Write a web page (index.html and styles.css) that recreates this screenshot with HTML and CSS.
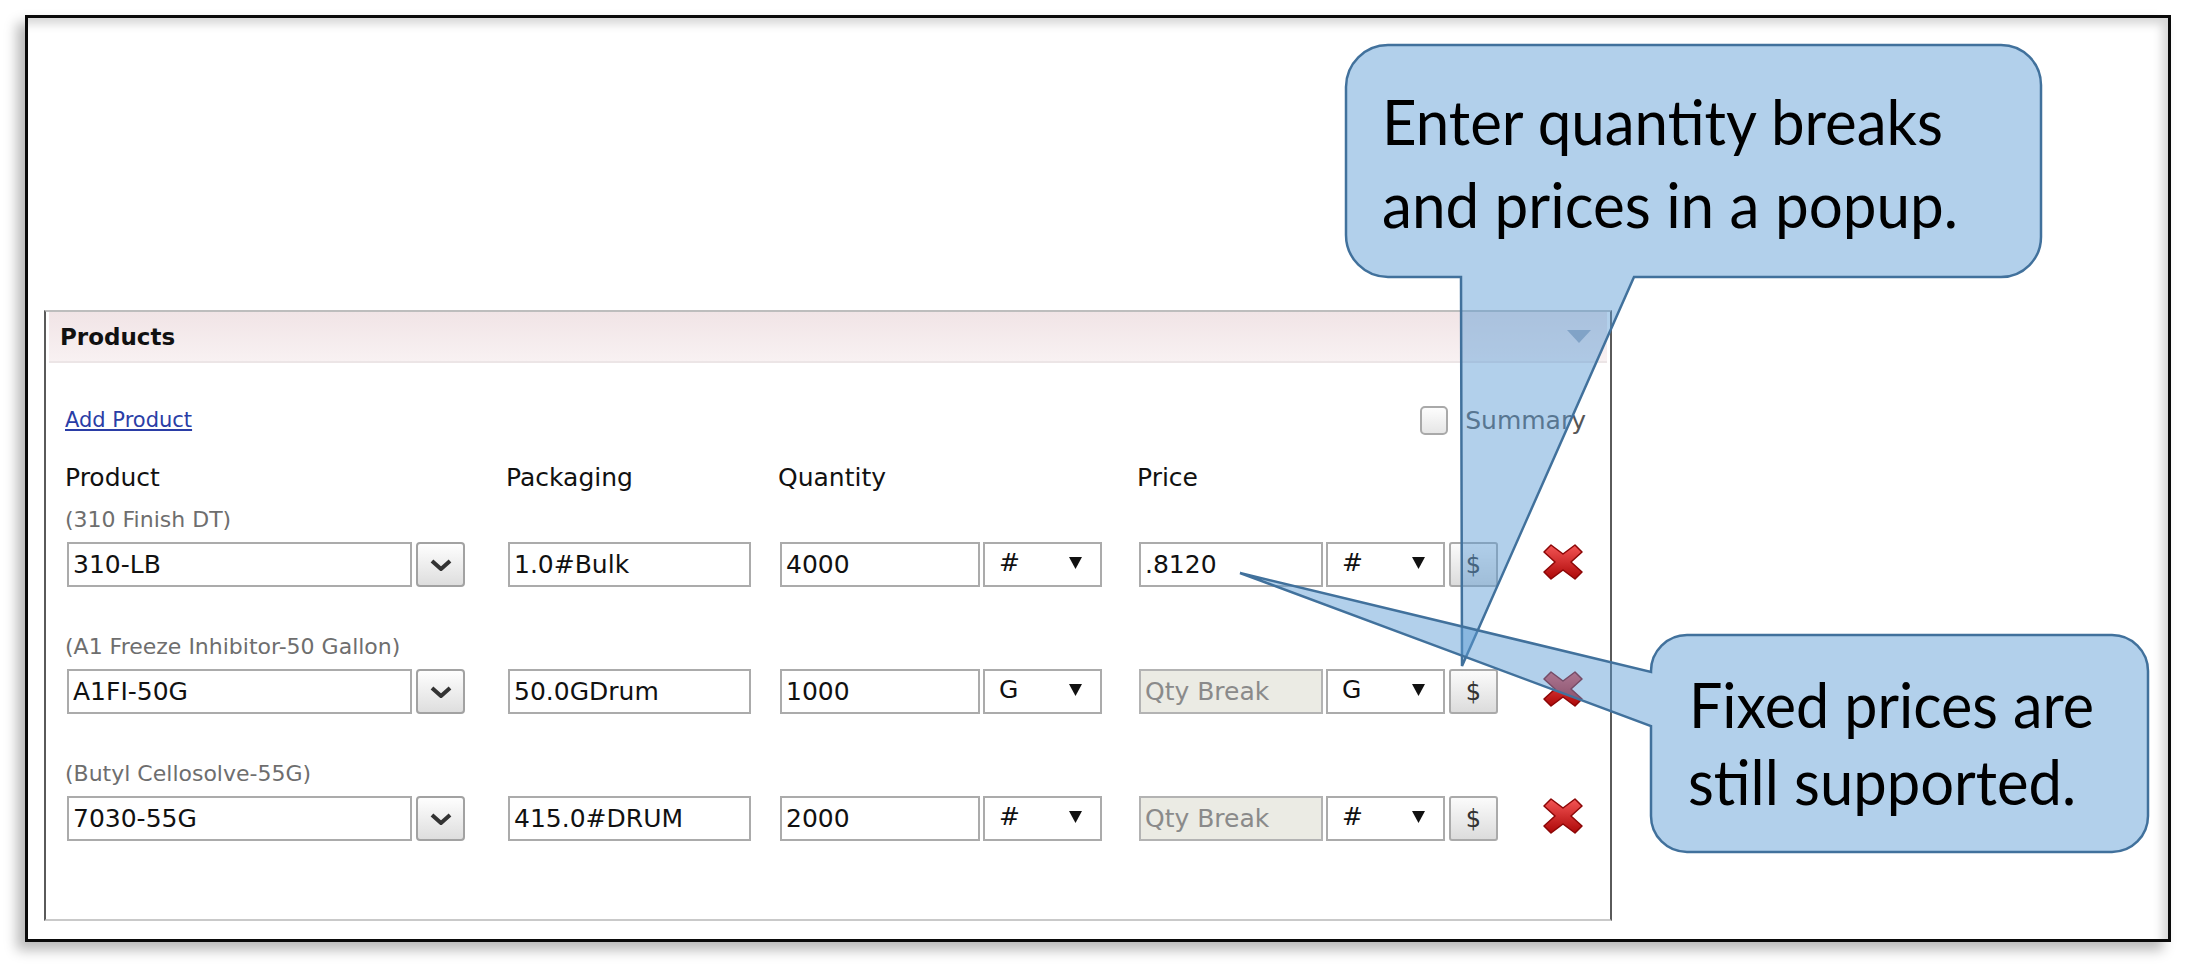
FILE: index.html
```html
<!DOCTYPE html>
<html lang="en">
<head>
    <meta charset="UTF-8">
    <title>Products - quantity breaks</title>
    <link rel="stylesheet" href="styles.css">
</head>
<body>
<div class="stage">
    <div class="frame">
        <section class="panel">
            <div class="panel-head">
                <span>Products</span>
                <svg class="collapse" width="24" height="13" viewBox="0 0 24 13"><polygon points="0,0 24,0 12,13" fill="#a3aabb"/></svg>
            </div>
            <div class="panel-body">
                <div class="toolbar">
                    <a href="#">Add Product</a>
                    <label class="summary"><span class="check"></span>Summary</label>
                </div>

                <div class="cols head">
                    <div>Product</div>
                    <div>Packaging</div>
                    <div>Quantity</div>
                    <div>Price</div>
                    <div></div>
                </div>

                <div class="item">
                    <div class="item-name">(310 Finish DT)</div>
                    <div class="cols">
                        <div class="combo">
                            <input type="text" value="310-LB">
                            <button class="drop"><svg width="22" height="12" viewBox="0 0 22 12"><polyline points="2,2 11,10 20,2" fill="none" stroke="#333" stroke-width="4"/></svg></button>
                        </div>
                        <input type="text" class="pack" value="1.0#Bulk">
                        <div class="pair">
                            <input type="text" class="qty" value="4000">
                            <div class="unit"><span>#</span><svg width="13" height="12" viewBox="0 0 13 12"><polygon points="0,0 13,0 6.5,12" fill="#111"/></svg></div>
                        </div>
                        <div class="pair">
                            <input type="text" class="price" value=".8120">
                            <div class="unit"><span>#</span><svg width="13" height="12" viewBox="0 0 13 12"><polygon points="0,0 13,0 6.5,12" fill="#111"/></svg></div>
                            <button class="dollar">$</button>
                        </div>
                        <svg class="del" width="40" height="38" viewBox="0 0 40 38"><use href="#xmark"/></svg>
                    </div>
                </div>

                <div class="item">
                    <div class="item-name">(A1 Freeze Inhibitor-50 Gallon)</div>
                    <div class="cols">
                        <div class="combo">
                            <input type="text" value="A1FI-50G">
                            <button class="drop"><svg width="22" height="12" viewBox="0 0 22 12"><polyline points="2,2 11,10 20,2" fill="none" stroke="#333" stroke-width="4"/></svg></button>
                        </div>
                        <input type="text" class="pack" value="50.0GDrum">
                        <div class="pair">
                            <input type="text" class="qty" value="1000">
                            <div class="unit"><span>G</span><svg width="13" height="12" viewBox="0 0 13 12"><polygon points="0,0 13,0 6.5,12" fill="#111"/></svg></div>
                        </div>
                        <div class="pair">
                            <input type="text" class="price" placeholder="Qty Break" disabled>
                            <div class="unit"><span>G</span><svg width="13" height="12" viewBox="0 0 13 12"><polygon points="0,0 13,0 6.5,12" fill="#111"/></svg></div>
                            <button class="dollar">$</button>
                        </div>
                        <svg class="del" width="40" height="38" viewBox="0 0 40 38"><use href="#xmark"/></svg>
                    </div>
                </div>

                <div class="item">
                    <div class="item-name">(Butyl Cellosolve-55G)</div>
                    <div class="cols">
                        <div class="combo">
                            <input type="text" value="7030-55G">
                            <button class="drop"><svg width="22" height="12" viewBox="0 0 22 12"><polyline points="2,2 11,10 20,2" fill="none" stroke="#333" stroke-width="4"/></svg></button>
                        </div>
                        <input type="text" class="pack" value="415.0#DRUM">
                        <div class="pair">
                            <input type="text" class="qty" value="2000">
                            <div class="unit"><span>#</span><svg width="13" height="12" viewBox="0 0 13 12"><polygon points="0,0 13,0 6.5,12" fill="#111"/></svg></div>
                        </div>
                        <div class="pair">
                            <input type="text" class="price" placeholder="Qty Break" disabled>
                            <div class="unit"><span>#</span><svg width="13" height="12" viewBox="0 0 13 12"><polygon points="0,0 13,0 6.5,12" fill="#111"/></svg></div>
                            <button class="dollar">$</button>
                        </div>
                        <svg class="del" width="40" height="38" viewBox="0 0 40 38"><use href="#xmark"/></svg>
                    </div>
                </div>
            </div>
        </section>
    </div>

    <!-- callouts drawn over the form -->
    <svg class="callouts" width="2195" height="975" viewBox="0 0 2195 975">
        <defs>
            <linearGradient id="red" x1="0" y1="0" x2="0" y2="1">
                <stop offset="0" stop-color="#f45555"/>
                <stop offset="1" stop-color="#ad0808"/>
            </linearGradient>
            <symbol id="xmark" viewBox="0 0 40 38">
                <path d="M8,2 L20,11 L32,2 L39,9 L28,19 L39,29 L32,36 L20,27 L8,36 L1,29 L12,19 L1,9 Z" fill="url(#red)" stroke="#8c0606" stroke-width="1.5" stroke-linejoin="round"/>
            </symbol>
        </defs>
        <path class="bubble" d="M1388,45 H2001 A40,40 0 0 1 2041,85 V237 A40,40 0 0 1 2001,277 H1634 L1462,666 L1461,277 H1388 A42,42 0 0 1 1346,235 V87 A42,42 0 0 1 1388,45 Z"/>
        <path class="bubble" d="M1687,635 H2112 A36,36 0 0 1 2148,671 V816 A36,36 0 0 1 2112,852 H1687 A36,36 0 0 1 1651,816 V726 L1240,573 L1651,672 V671 A36,36 0 0 1 1687,635 Z"/>
        <text class="note" x="1382" y="145" textLength="561" lengthAdjust="spacingAndGlyphs">Enter quantity breaks</text>
        <text class="note" x="1382" y="228" textLength="576" lengthAdjust="spacingAndGlyphs">and prices in a popup.</text>
        <text class="note" x="1689" y="728" textLength="405" lengthAdjust="spacingAndGlyphs">Fixed prices are</text>
        <text class="note" x="1688" y="805" textLength="388" lengthAdjust="spacingAndGlyphs">still supported.</text>
    </svg>
</div>
</body>
</html>
```

FILE: styles.css
```css
* {
    box-sizing: border-box;
}

body {
    margin: 0;
    background: #fff;
    font-family: "DejaVu Sans", Verdana, sans-serif;
    color: #111;
}

.stage {
    position: relative;
    width: 2195px;
    height: 975px;
    overflow: hidden;
}

.frame {
    margin: 15px 0 0 25px;
    width: 2146px;
    height: 927px;
    border: 3px solid #0a0a0a;
    background: #fff;
    box-shadow: -8px 8px 12px rgba(0,0,0,0.28), inset -14px 14px 10px -8px rgba(0,0,0,0.16);
    padding: 292px 0 0 16px;
}

.panel {
    width: 1568px;
    height: 611px;
    border: 2px solid #5a5a5a;
    border-top-color: #bdbdbd;
    border-bottom-color: #c9c9c9;
}

.panel-head {
    margin: 0 3px;
    height: 51px;
    display: flex;
    align-items: center;
    justify-content: space-between;
    padding: 0 16px 0 11px;
    background: linear-gradient(#f1e4e6, #f8f1f2);
    border-bottom: 2px solid #ece5e6;
    font-weight: bold;
    font-size: 23px;
}

.panel-body {
    padding: 42px 0 0 19px;
}

.toolbar {
    height: 30px;
    display: flex;
    align-items: center;
    padding-right: 24px;
}

.toolbar a {
    color: #2a3da6;
    font-size: 21px;
}

.summary {
    margin-left: auto;
    display: flex;
    align-items: center;
    gap: 17px;
    font-size: 25px;
    color: #555;
}

.check {
    width: 28px;
    height: 29px;
    border: 2px solid #a9a9a9;
    border-radius: 5px;
    background: linear-gradient(#fdfdfd, #e6e6e6);
}

.cols {
    display: grid;
    grid-template-columns: 441px 272px 359px 404px 40px;
    align-items: center;
    padding-left: 2px;
}

.head {
    margin-top: 28px;
    height: 30px;
    line-height: 30px;
    font-size: 25px;
    padding-left: 0;
}

.item {
    margin-top: 47px;
}

.head + .item {
    margin-top: 14px;
}

.item-name {
    height: 26px;
    line-height: 26px;
    font-size: 22px;
    color: #6e6e6e;
    margin-bottom: 9px;
}

.cols input {
    height: 45px;
    border: 2px solid #ababab;
    padding: 0 4px;
    font-family: "DejaVu Sans", Verdana, sans-serif;
    font-size: 25px;
    color: #111;
    background: #fff;
    outline: none;
}

.cols input:disabled {
    background: #ebebe4;
    border-color: #b3b3b3;
}

.cols input::placeholder {
    color: #8a8a8a;
    opacity: 1;
}

.combo {
    display: flex;
    gap: 4px;
}

.combo input {
    width: 345px;
}

.drop {
    width: 49px;
    height: 45px;
    border: 2px solid #a2a2a2;
    border-radius: 4px;
    background: linear-gradient(#fefefe, #dedede);
    display: flex;
    align-items: center;
    justify-content: center;
    padding: 0;
}

.pack {
    width: 243px;
}

.pair {
    display: flex;
    gap: 3px;
}

.qty {
    width: 200px;
}

.price {
    width: 184px;
}

.unit {
    width: 119px;
    height: 45px;
    border: 2px solid #ababab;
    background: #fff;
    display: flex;
    align-items: center;
    justify-content: space-between;
    padding: 0 18px 4px 14px;
    font-size: 25px;
}

.dollar {
    width: 49px;
    height: 45px;
    margin-left: 1px;
    border: 2px solid #aaaaaa;
    border-radius: 3px;
    background: linear-gradient(#fbfbfb, #dcdcdc);
    font-family: "DejaVu Sans", Verdana, sans-serif;
    font-size: 24px;
    color: #333;
    padding: 0;
}

.del {
    margin-top: -6px;
}

.callouts {
    position: absolute;
    left: 0;
    top: 0;
    pointer-events: none;
}

.bubble {
    fill: rgba(91,155,213,0.47);
    stroke: #41719c;
    stroke-width: 2.5;
    stroke-linejoin: miter;
}

.note {
    font-family: Lato, "Open Sans", sans-serif;
    font-size: 62px;
    fill: #000;
}
```
